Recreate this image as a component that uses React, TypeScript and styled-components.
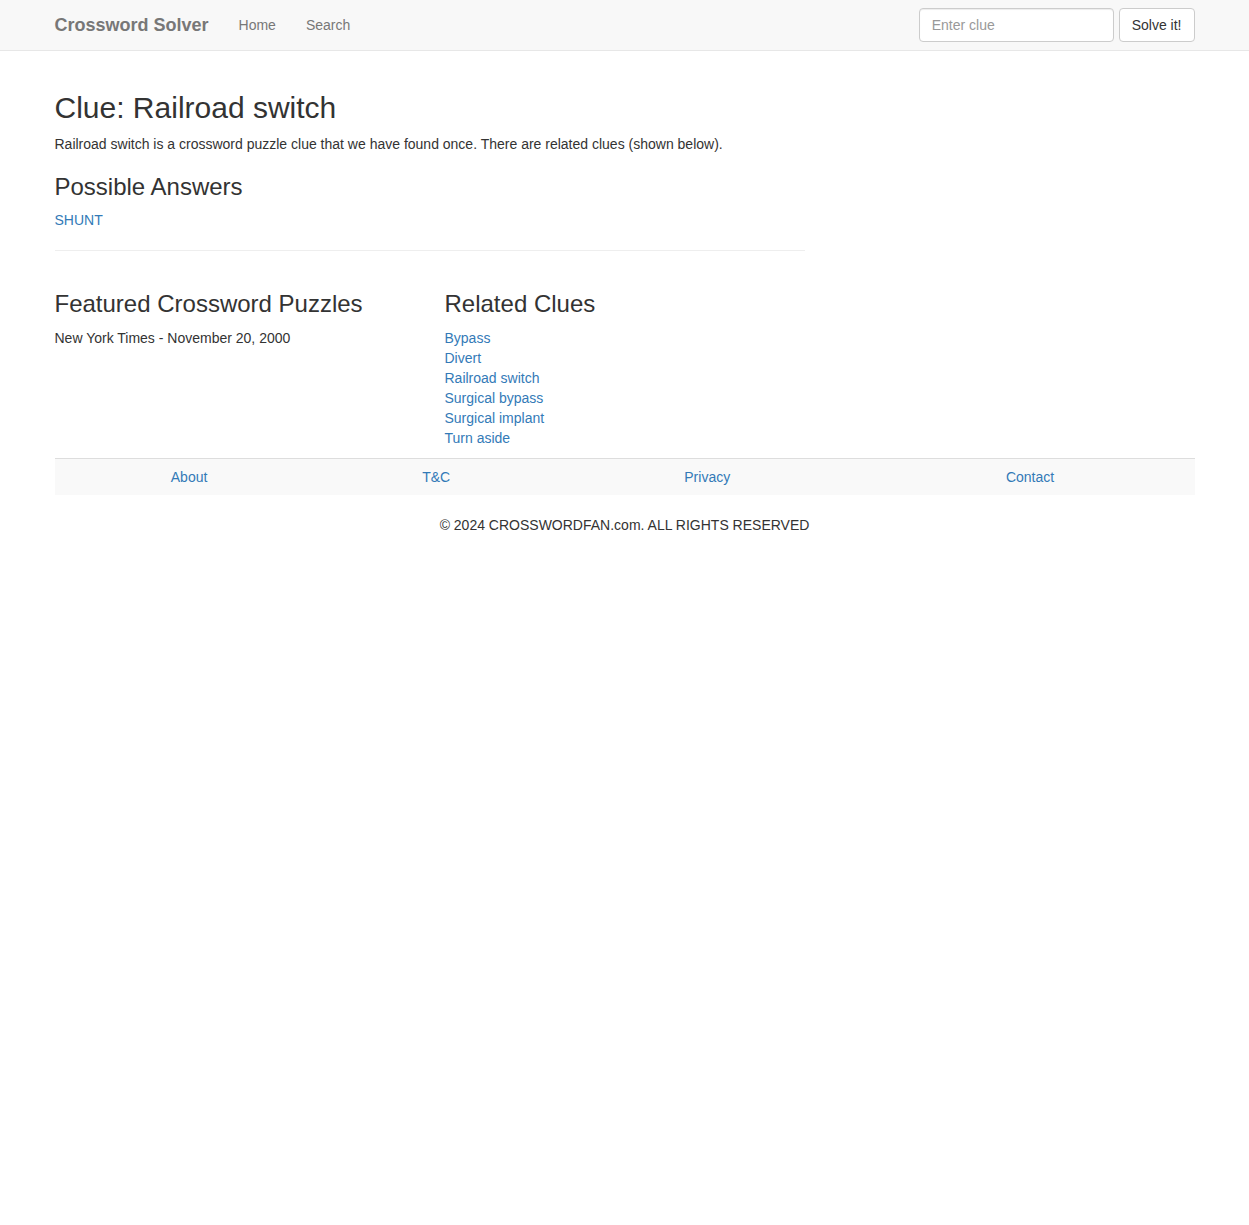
import styled, { createGlobalStyle } from "styled-components";

const GlobalStyle = createGlobalStyle`
  html, body {
    margin: 0;
    padding: 0;
    background: #fff;
  }
  body {
    font-family: "Liberation Sans", Arial, Helvetica, sans-serif;
    font-size: 14px;
    line-height: 20px;
    color: #333;
  }
  * {
    box-sizing: border-box;
  }
`;

const Navbar = styled.nav`
  background-color: #f8f8f8;
  border-bottom: 1px solid #e7e7e7;
  min-height: 50px;
  margin-bottom: 20px;
`;
const Container = styled.div`
  display: flow-root;
  width: 1170px;
  margin: 0 auto;
  padding: 0 15px;
`;
const NavInner = styled(Container)`
  display: flex;
  align-items: center;
  height: 50px;
`;
const Brand = styled.a`
  font-size: 18px;
  font-weight: bold;
  line-height: 20px;
  color: #777;
  text-decoration: none;
  padding: 15px 15px 15px 0;
`;
const NavLinks = styled.ul`
  display: flex;
  list-style: none;
  margin: 0;
  padding: 0;
  flex: 1;
`;
const NavLink = styled.a`
  display: block;
  padding: 15px;
  line-height: 20px;
  color: #777;
  text-decoration: none;
`;
const SearchForm = styled.form`
  display: flex;
  gap: 5px;
  margin: 0;
`;
const ClueInput = styled.input`
  width: 195px;
  height: 34px;
  padding: 6px 12px;
  font-family: inherit;
  font-size: 14px;
  color: #555;
  background: #fff;
  border: 1px solid #ccc;
  border-radius: 4px;
  box-shadow: inset 0 1px 1px rgba(0, 0, 0, 0.075);
  &::placeholder {
    color: #999;
  }
`;
const SolveButton = styled.button`
  height: 34px;
  padding: 6px 12px;
  font-family: inherit;
  font-size: 14px;
  color: #333;
  background: #fff;
  border: 1px solid #ccc;
  border-radius: 4px;
`;

const MainCol = styled.div`
  width: 750px;
`;
const Title = styled.h1`
  font-size: 30px;
  font-weight: 500;
  line-height: 1.1;
  margin: 20px 0 10px;
`;
const Heading = styled.h3`
  font-size: 24px;
  font-weight: 500;
  line-height: 1.1;
  margin: 20px 0 10px;
`;
const Text = styled.p`
  margin: 0 0 10px;
`;
const Link = styled.a`
  color: #337ab7;
  text-decoration: none;
`;
const Rule = styled.hr`
  margin: 20px 0;
  border: 0;
  border-top: 1px solid #eee;
`;
const Columns = styled.div`
  display: grid;
  grid-template-columns: 360px 360px;
  column-gap: 30px;
`;
const ClueList = styled.ul`
  list-style: none;
  margin: 0 0 10px;
  padding: 0;
`;

const FooterTable = styled.table`
  width: 100%;
  border-collapse: collapse;
  border-spacing: 0;
  margin-bottom: 20px;
  td {
    padding: 8px;
    line-height: 20px;
    text-align: center;
    background: #f9f9f9;
    border-top: 1px solid #ddd;
  }
`;
const Copyright = styled.p`
  text-align: center;
  margin: 0;
`;

const related = [
  "Bypass",
  "Divert",
  "Railroad switch",
  "Surgical bypass",
  "Surgical implant",
  "Turn aside",
];

const App = () => {
  return (
    <>
      <GlobalStyle />
      <Navbar>
        <NavInner>
          <Brand href="#">Crossword Solver</Brand>
          <NavLinks>
            <li>
              <NavLink href="#">Home</NavLink>
            </li>
            <li>
              <NavLink href="#">Search</NavLink>
            </li>
          </NavLinks>
          <SearchForm onSubmit={(e) => e.preventDefault()}>
            <ClueInput type="text" placeholder="Enter clue" />
            <SolveButton type="submit">Solve it!</SolveButton>
          </SearchForm>
        </NavInner>
      </Navbar>

      <Container>
        <MainCol>
          <Title>Clue: Railroad switch</Title>
          <Text>
            Railroad switch is a crossword puzzle clue that we have found once.
            There are related clues (shown below).
          </Text>
          <Heading>Possible Answers</Heading>
          <Text>
            <Link href="#">SHUNT</Link>
          </Text>
          <Rule />
        </MainCol>

        <Columns>
          <div>
            <Heading>Featured Crossword Puzzles</Heading>
            <Text>New York Times - November 20, 2000</Text>
          </div>
          <div>
            <Heading>Related Clues</Heading>
            <ClueList>
              {related.map((clue) => (
                <li key={clue}>
                  <Link href="#">{clue}</Link>
                </li>
              ))}
            </ClueList>
          </div>
        </Columns>

        {/* footer */}
        <FooterTable>
          <tbody>
            <tr>
              <td>
                <Link href="#">About</Link>
              </td>
              <td>
                <Link href="#">T&amp;C</Link>
              </td>
              <td>
                <Link href="#">Privacy</Link>
              </td>
              <td>
                <Link href="#">Contact</Link>
              </td>
            </tr>
          </tbody>
        </FooterTable>
        <Copyright>© 2024 CROSSWORDFAN.com. ALL RIGHTS RESERVED</Copyright>
      </Container>
    </>
  );
};

export default App;
